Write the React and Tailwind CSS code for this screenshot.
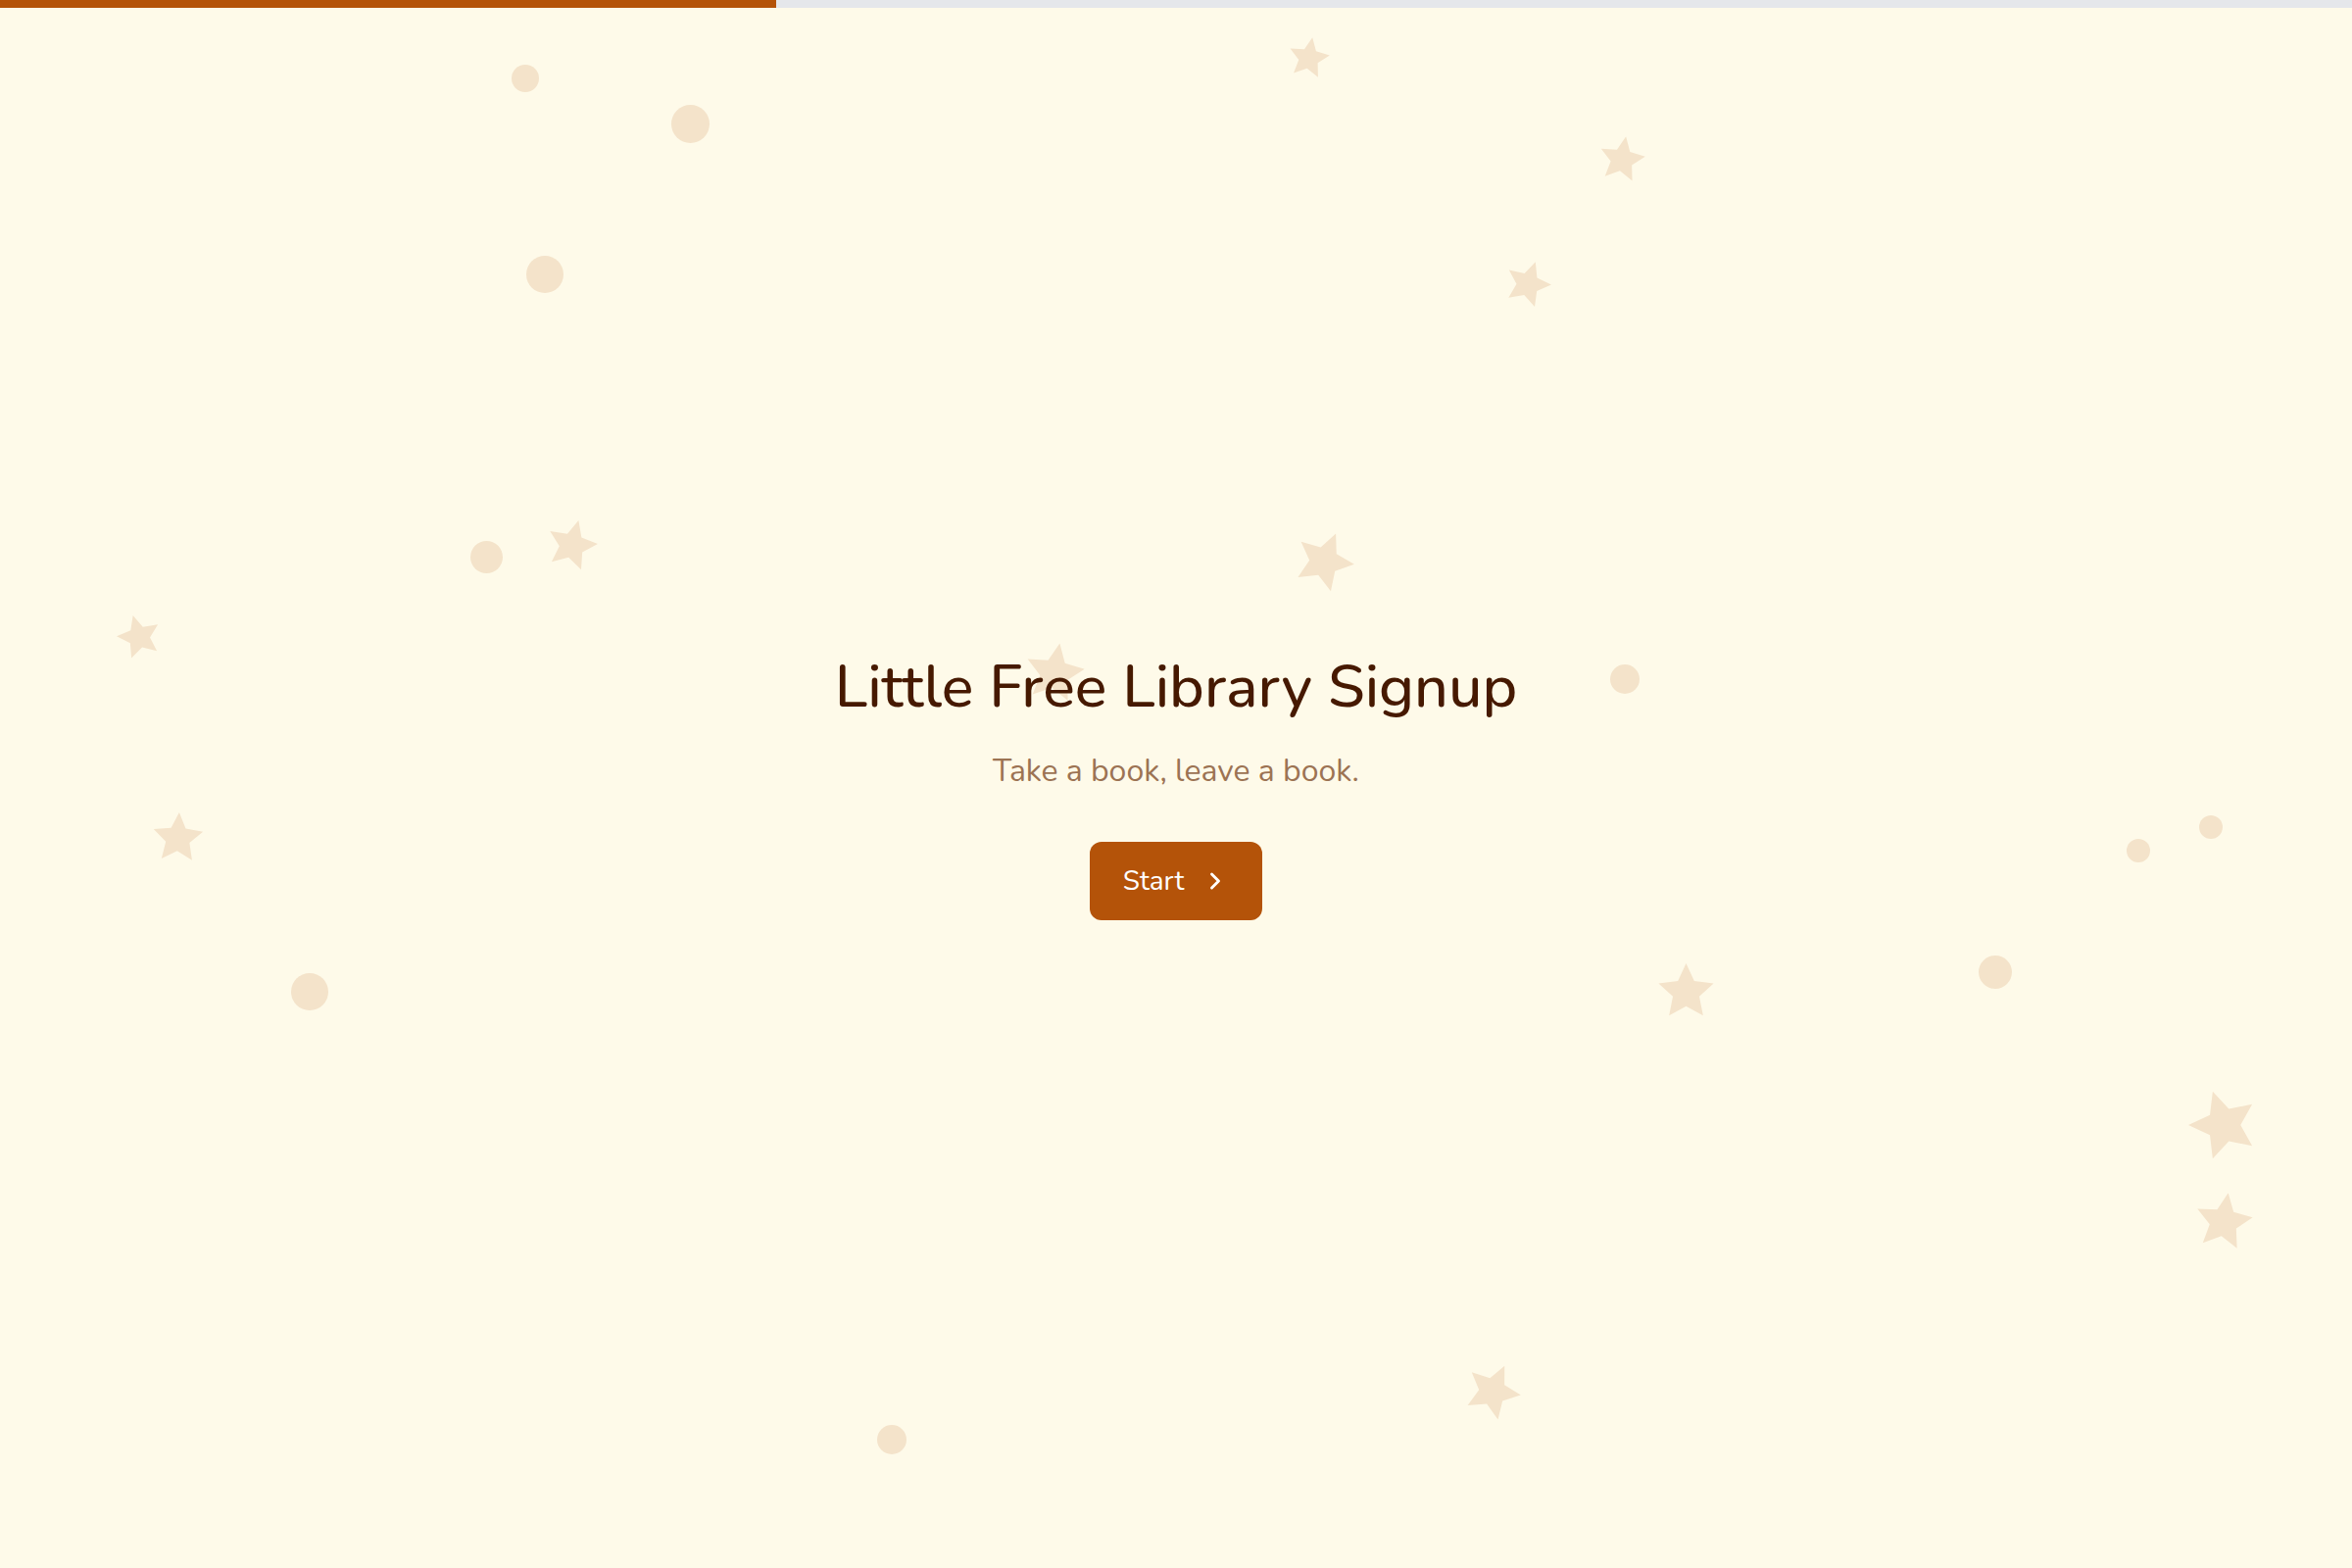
import { ChevronRight } from 'lucide-react';

// decorative confetti scattered behind the hero
const dots = [
  { x: 536, y: 80, d: 28 },
  { x: 704, y: 126, d: 39 },
  { x: 556, y: 280, d: 38 },
  { x: 496, y: 568, d: 33 },
  { x: 1658, y: 693, d: 30 },
  { x: 2256, y: 844, d: 24 },
  { x: 2182, y: 868, d: 24 },
  { x: 2036, y: 992, d: 34 },
  { x: 316, y: 1012, d: 38 },
  { x: 910, y: 1469, d: 30 },
];

const stars = [
  { x: 1335, y: 59, r: 21.5, rot: 10 },
  { x: 1655, y: 163, r: 24, rot: 10 },
  { x: 1559, y: 290, r: 24, rot: 19 },
  { x: 583, y: 556, r: 26.5, rot: 15 },
  { x: 1351, y: 573, r: 31, rot: 23 },
  { x: 142, y: 650, r: 23, rot: -16 },
  { x: 1076, y: 687, r: 31, rot: 10 },
  { x: 181, y: 855, r: 26.5, rot: 3 },
  { x: 1720, y: 1012, r: 29.5, rot: 0 },
  { x: 2269, y: 1148, r: 36, rot: -18 },
  { x: 2269, y: 1247, r: 30, rot: 9 },
  { x: 1523, y: 1420, r: 29, rot: 25 },
];

// five-point star on a unit circle
const starPoints = Array.from({ length: 10 }, (_, i) => {
  const a = ((-90 + i * 36) * Math.PI) / 180;
  const rad = i % 2 === 0 ? 1 : 0.48;
  return `${(Math.cos(a) * rad).toFixed(4)},${(Math.sin(a) * rad).toFixed(4)}`;
}).join(' ');

function Star({ x, y, r, rot }) {
  return (
    <svg
      viewBox="-1 -1 2 2"
      className="absolute fill-[#f4e3ca]"
      style={{ left: x - r, top: y - r, width: r * 2, height: r * 2, transform: `rotate(${rot}deg)` }}
    >
      <polygon points={starPoints} />
    </svg>
  );
}

export default function App() {
  return (
    <div className="relative min-h-screen overflow-hidden bg-[#fefae9] font-['Nunito','Lato',sans-serif]">
      {/* progress */}
      <div className="fixed inset-x-0 top-0 z-20 h-2 bg-gray-200">
        <div className="h-full w-[33%] bg-[#b45309]" />
      </div>

      <div className="pointer-events-none absolute inset-0">
        {dots.map((d, i) => (
          <div
            key={i}
            className="absolute rounded-full bg-[#f4e3ca]"
            style={{ left: d.x - d.d / 2, top: d.y - d.d / 2, width: d.d, height: d.d }}
          />
        ))}
        {stars.map((s, i) => (
          <Star key={i} {...s} />
        ))}
      </div>

      <main className="relative z-10 flex min-h-screen flex-col items-center justify-center pt-[3px] text-center">
        <h1 className="text-[61px] font-medium leading-[75px] text-amber-950">Little Free Library Signup</h1>
        <p className="mt-[28px] text-[32px] leading-[40px] text-[#9c7353]">Take a book, leave a book.</p>
        <button className="mt-[52px] flex h-[80px] items-center gap-[18px] rounded-xl bg-[#b45309] px-[34px] text-[28px] text-white hover:bg-amber-800">
          Start
          <ChevronRight size={28} strokeWidth={2.5} />
        </button>
      </main>
    </div>
  );
}
